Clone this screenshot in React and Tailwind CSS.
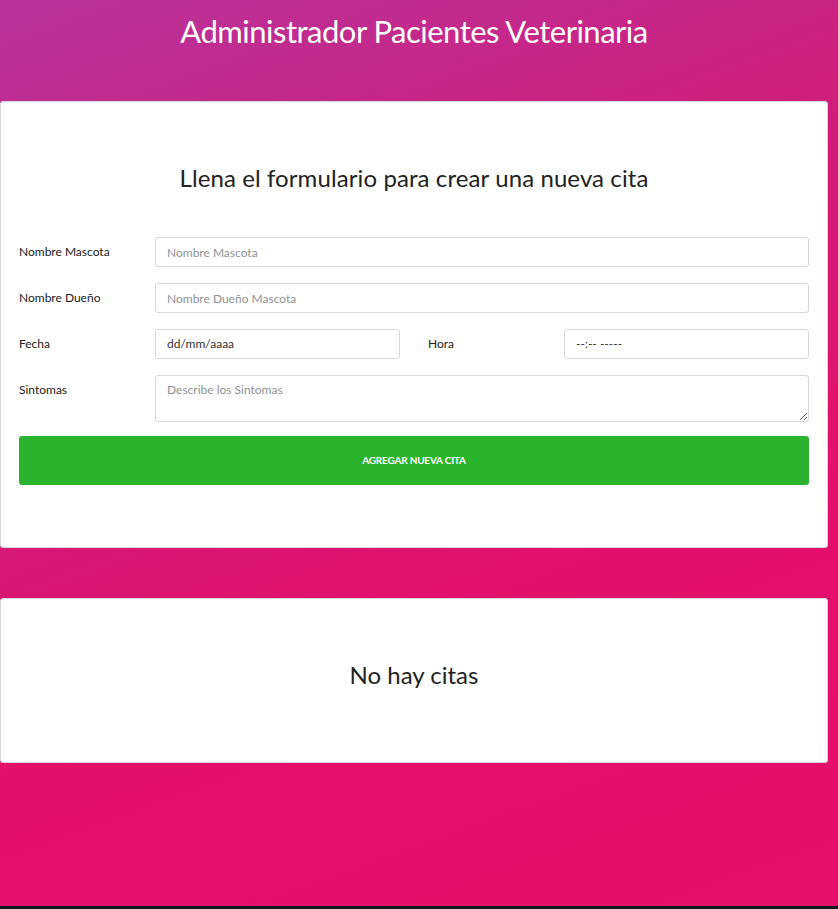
export default function App() {
  return (
    <div className="min-h-[909px] w-full bg-[linear-gradient(160deg,#b8339b_0%,#d11d7a_35%,#e3106b_65%,#e60f6a_100%)] font-['Lato','Noto_Sans',sans-serif] flex flex-col">
      <div className="w-[828px] flex flex-col">
        <h1 className="text-white text-[31px] leading-[38px] text-center pt-[12px] h-[101px] tracking-[-0.5px]">
          Administrador Pacientes Veterinaria
        </h1>
        <div className="bg-white border border-[#d4d7dc] rounded-[3px] h-[447px] px-[18px] pt-[61px]">
          <h2 className="text-[#222] text-[24px] leading-[30px] text-center tracking-[0.1px]">Llena el formulario para crear una nueva cita</h2>
          <form className="mt-[44px] flex flex-col gap-[16px]" onSubmit={(e) => e.preventDefault()}>
            <div className="flex items-start">
              <label className="w-[136px] text-[12px] text-[#222] pt-[6px]">Nombre Mascota</label>
              <input className="flex-1 h-[30px] border border-[#d4d7dc] rounded-[3px] px-[11px] text-[12px] placeholder:text-[#8e9298] outline-none" placeholder="Nombre Mascota" />
            </div>
            <div className="flex items-start">
              <label className="w-[136px] text-[12px] text-[#222] pt-[6px]">Nombre Dueño</label>
              <input className="flex-1 h-[30px] border border-[#d4d7dc] rounded-[3px] px-[11px] text-[12px] placeholder:text-[#8e9298] outline-none" placeholder="Nombre Dueño Mascota" />
            </div>
            <div className="flex items-start">
              <label className="w-[136px] text-[12px] text-[#222] pt-[6px]">Fecha</label>
              <div className="w-[245px] h-[30px] border border-[#d4d7dc] rounded-[3px] px-[11px] text-[12px] text-[#333] flex items-center">dd/mm/aaaa</div>
              <div className="w-[28px]" />
              <label className="w-[136px] text-[12px] text-[#222] pt-[6px]">Hora</label>
              <div className="flex-1 h-[30px] border border-[#d4d7dc] rounded-[3px] px-[11px] text-[12px] text-[#333] flex items-center">--:-- -----</div>
            </div>
            <div className="flex items-start">
              <label className="w-[136px] text-[12px] text-[#222] pt-[6px]">Sintomas</label>
              <textarea className="flex-1 h-[47px] border border-[#d4d7dc] rounded-[3px] px-[11px] pt-[5px] text-[12px] placeholder:text-[#8e9298] outline-none" placeholder="Describe los Sintomas" />
            </div>
            <button type="submit" className="-mt-[2px] h-[49px] w-full bg-[#2ab42e] rounded-[3px] text-white text-[10px] font-bold tracking-[-0.2px]">
              AGREGAR NUEVA CITA
            </button>
          </form>
        </div>
        <div className="h-[50px]" />
        <div className="bg-white border border-[#d4d7dc] rounded-[3px] h-[165px] flex items-center justify-center pb-[12px]">
          <h2 className="text-[#222] text-[24px] leading-[30px] text-center">No hay citas</h2>
        </div>
      </div>
      <div className="flex-1" />
      <div className="h-[3px] bg-[#0c1a20]" />
    </div>
  );
}
